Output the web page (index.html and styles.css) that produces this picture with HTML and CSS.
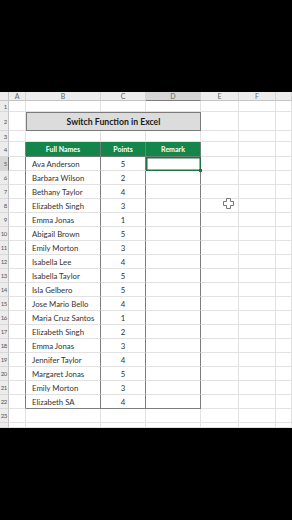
FILE: index.html
```html
<!DOCTYPE html>
<html>
<head>
<meta charset="utf-8">
<link rel="stylesheet" href="styles.css">
</head>
<body>
<div class="screen">
  <div class="sheet">
    <div class="c ch corner"></div><div class="c ch">A</div><div class="c ch">B</div><div class="c ch">C</div><div class="c ch chsel">D</div><div class="c ch">E</div><div class="c ch">F</div><div class="c ch"></div>

    <div class="c rn"><span>1</span></div><div class="c"></div><div class="c"></div><div class="c"></div><div class="c"></div><div class="c"></div><div class="c"></div><div class="c"></div>

    <div class="c rn"><span>2</span></div><div class="c"></div><div class="c title">Switch Function in Excel</div><div class="c"></div><div class="c"></div><div class="c"></div>

    <div class="c rn"><span>3</span></div><div class="c"></div><div class="c"></div><div class="c"></div><div class="c"></div><div class="c"></div><div class="c"></div><div class="c"></div>

    <div class="c rn"><span>4</span></div><div class="c al"></div><div class="c hd">Full Names</div><div class="c hd">Points</div><div class="c hd">Remark</div><div class="c"></div><div class="c"></div><div class="c"></div>

    <div class="c rn rnsel"><span>5</span></div><div class="c al"></div><div class="c nm">Ava Anderson</div><div class="c pt">5</div><div class="c td sel"><i class="handle"></i></div><div class="c"></div><div class="c"></div><div class="c"></div>
    <div class="c rn"><span>6</span></div><div class="c al"></div><div class="c nm">Barbara Wilson</div><div class="c pt">2</div><div class="c td"></div><div class="c"></div><div class="c"></div><div class="c"></div>
    <div class="c rn"><span>7</span></div><div class="c al"></div><div class="c nm">Bethany Taylor</div><div class="c pt">4</div><div class="c td"></div><div class="c"></div><div class="c"></div><div class="c"></div>
    <div class="c rn"><span>8</span></div><div class="c al"></div><div class="c nm">Elizabeth Singh</div><div class="c pt">3</div><div class="c td"></div><div class="c"></div><div class="c"></div><div class="c"></div>
    <div class="c rn"><span>9</span></div><div class="c al"></div><div class="c nm">Emma Jonas</div><div class="c pt">1</div><div class="c td"></div><div class="c"></div><div class="c"></div><div class="c"></div>
    <div class="c rn"><span>10</span></div><div class="c al"></div><div class="c nm">Abigail Brown</div><div class="c pt">5</div><div class="c td"></div><div class="c"></div><div class="c"></div><div class="c"></div>
    <div class="c rn"><span>11</span></div><div class="c al"></div><div class="c nm">Emily Morton</div><div class="c pt">3</div><div class="c td"></div><div class="c"></div><div class="c"></div><div class="c"></div>
    <div class="c rn"><span>12</span></div><div class="c al"></div><div class="c nm">Isabella Lee</div><div class="c pt">4</div><div class="c td"></div><div class="c"></div><div class="c"></div><div class="c"></div>
    <div class="c rn"><span>13</span></div><div class="c al"></div><div class="c nm">Isabella Taylor</div><div class="c pt">5</div><div class="c td"></div><div class="c"></div><div class="c"></div><div class="c"></div>
    <div class="c rn"><span>14</span></div><div class="c al"></div><div class="c nm">Isla Gelbero</div><div class="c pt">5</div><div class="c td"></div><div class="c"></div><div class="c"></div><div class="c"></div>
    <div class="c rn"><span>15</span></div><div class="c al"></div><div class="c nm">Jose Mario Bello</div><div class="c pt">4</div><div class="c td"></div><div class="c"></div><div class="c"></div><div class="c"></div>
    <div class="c rn"><span>16</span></div><div class="c al"></div><div class="c nm">Maria Cruz Santos</div><div class="c pt">1</div><div class="c td"></div><div class="c"></div><div class="c"></div><div class="c"></div>
    <div class="c rn"><span>17</span></div><div class="c al"></div><div class="c nm">Elizabeth Singh</div><div class="c pt">2</div><div class="c td"></div><div class="c"></div><div class="c"></div><div class="c"></div>
    <div class="c rn"><span>18</span></div><div class="c al"></div><div class="c nm">Emma Jonas</div><div class="c pt">3</div><div class="c td"></div><div class="c"></div><div class="c"></div><div class="c"></div>
    <div class="c rn"><span>19</span></div><div class="c al"></div><div class="c nm">Jennifer Taylor</div><div class="c pt">4</div><div class="c td"></div><div class="c"></div><div class="c"></div><div class="c"></div>
    <div class="c rn"><span>20</span></div><div class="c al"></div><div class="c nm">Margaret Jonas</div><div class="c pt">5</div><div class="c td"></div><div class="c"></div><div class="c"></div><div class="c"></div>
    <div class="c rn"><span>21</span></div><div class="c al"></div><div class="c nm">Emily Morton</div><div class="c pt">3</div><div class="c td"></div><div class="c"></div><div class="c"></div><div class="c"></div>
    <div class="c rn"><span>22</span></div><div class="c al"></div><div class="c nm bot">Elizabeth SA</div><div class="c pt bot">4</div><div class="c td bot"></div><div class="c"></div><div class="c"></div><div class="c"></div>

    <div class="c rn"><span>23</span></div><div class="c"></div><div class="c"></div><div class="c"></div><div class="c"></div><div class="c"></div><div class="c"></div><div class="c"></div>
    <div class="c rn"></div><div class="c"></div><div class="c"></div><div class="c"></div><div class="c"></div><div class="c"></div><div class="c"></div><div class="c"></div>

    <svg class="cursor" width="11" height="11" viewBox="0 0 11 11">
      <path d="M3.5 0.5h4v3h3v4h-3v3h-4v-3h-3v-4h3z" fill="#fff" stroke="#777" stroke-width="1"/>
    </svg>
  </div>
</div>
</body>
</html>
```

FILE: styles.css
```css
* { box-sizing: border-box; }
html, body { margin: 0; padding: 0; background: #000; }
.screen {
  width: 292px;
  height: 520px;
  padding-top: 92px;
  overflow: hidden;
  background: #000;
}
.sheet {
  position: relative;
  width: 292px;
  height: 336px;
  background: #fff;
  overflow: hidden;
  display: grid;
  grid-template-columns: 9px 17px 75px 45px 55px 38px 37px 16px;
  grid-template-rows: 9px 11px 19px 11px 15px repeat(19, 14px) 5px;
  font-family: Lato, "Open Sans", sans-serif;
}
.c {
  border-right: 1px solid #e2e2e2;
  border-bottom: 1px solid #e2e2e2;
  display: flex;
  align-items: center;
  min-width: 0;
  overflow: hidden;
  white-space: nowrap;
}
.ch {
  background: #ececec;
  border-bottom: 1px solid #c4c4c4;
  border-right: 1px solid #d4d4d4;
  justify-content: center;
  font-size: 7px;
  color: #666;
}
.chsel {
  background: #d6d6d6;
  border-bottom: 1px solid #7d7d7d;
}
.corner { border-right: 1px solid #c4c4c4; }
.rn {
  background: #ececec;
  border-right: 1px solid #c4c4c4;
  border-bottom: 1px solid #d8d8d8;
  justify-content: flex-end;
  padding-right: 1px;
  font-size: 6px;
  letter-spacing: -0.3px;
  color: #555;
}
.rn span { flex: none; }
.rnsel {
  background: #d6d6d6;
  border-right: 1px solid #7d7d7d;
}
.title {
  grid-column: span 3;
  border: 1px solid #7a7a7a;
  background: #dcdcdc;
  justify-content: center;
  font-weight: 700;
  font-size: 8.7px;
  color: #1a1a1a;
}
.al { border-right-color: #7d7d7d; }
.hd {
  background: #14864b;
  color: #fff;
  font-weight: 700;
  font-size: 7px;
  justify-content: center;
  border-right: 1px solid #6f7d74;
  border-bottom: 1px solid #6f7d74;
}
.nm {
  font-size: 7.8px;
  color: #333;
  padding-left: 6px;
  border-right-color: #7d7d7d;
}
.pt {
  font-size: 7.8px;
  color: #333;
  justify-content: center;
  border-right-color: #7d7d7d;
}
.td { border-right-color: #7d7d7d; }
.bot { border-bottom-color: #7d7d7d; }
.sel {
  position: relative;
  overflow: visible;
  border: 1px solid #217346;
  box-shadow: inset 0 0 0 0.5px #217346;
}
.handle {
  position: absolute;
  right: -2px;
  bottom: -2px;
  width: 3px;
  height: 3px;
  background: #217346;
}
.cursor {
  position: absolute;
  left: 223px;
  top: 106px;
}
```
